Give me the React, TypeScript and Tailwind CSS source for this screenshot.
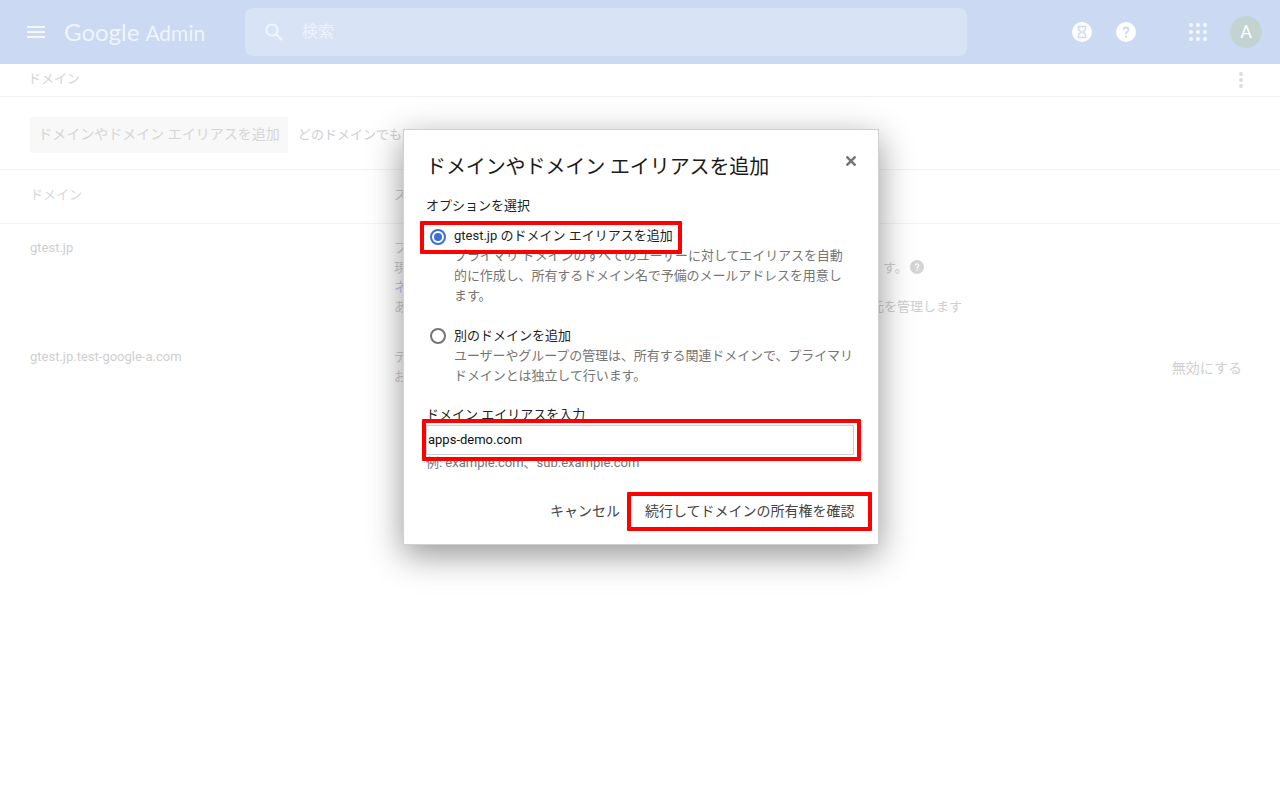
import React from "react";

const F = "font-['Roboto','Noto_Sans_CJK_JP',sans-serif]";

function HelpDisc({ size, fg, bg }: { size: number; fg: string; bg: string }) {
  return (
    <svg width={size} height={size} viewBox="0 0 24 24">
      <circle cx="12" cy="12" r="12" fill={bg} />
      <path d="M8 9.4a4 4 0 0 1 8 0c0 2.6-3 2.900-3 5.400h-2.200c0-3.400 3-3.400 3-5.400a1.800 1.800 0 0 0-3.600 0z" fill={fg} />
      <rect x="10.800" y="16.200" width="2.300" height="2.400" fill={fg} />
    </svg>
  );
}

function Header() {
  return (
    <header className="h-16 bg-[#cbd9f3] flex items-center shrink-0">
      <svg className="ml-[27px] w-[18px] h-3" viewBox="0 0 18 12">
        <path d="M0 0h18v2H0zM0 5h18v2H0zM0 10h18v2H0z" fill="#f4f7fd" />
      </svg>
      <span className="ml-[19px] w-[181px] text-[#f0f4fc] font-['Lato',sans-serif] whitespace-nowrap flex items-baseline">
        <span className="text-[24px]">Google</span>
        <span className="ml-[6px] text-[21px]">Admin</span>
      </span>
      <div className="w-[722px] h-12 rounded-lg bg-[#d8e3f6] flex items-center pl-[19px]">
        <svg width="20" height="20" viewBox="0 0 20 20" fill="none" stroke="#f0f4fc" strokeWidth="2">
          <circle cx="8" cy="8" r="5.600" />
          <path d="M12.200 12.200l6 6" />
        </svg>
        <span className="ml-[18px] text-base text-[#eef3fb]">検索</span>
      </div>
      <div className="ml-[105px] flex items-center">
        <svg width="20" height="20" viewBox="0 0 20 20">
          <circle cx="10" cy="10" r="10" fill="#fff" />
          <path d="M6.500 4.500h7v3L11 10l2.500 2.500v3h-7v-3L9 10 6.500 7.500z" fill="none" stroke="#cbd9f3" strokeWidth="1.500" />
        </svg>
        <span className="ml-6">
          <HelpDisc size={20} fg="#cbd9f3" bg="#fff" />
        </span>
        <svg className="ml-[53px]" width="18" height="18" viewBox="0 0 18 18" fill="#f4f7fd">
          {[2, 9, 16].map((y) =>
            [2, 9, 16].map((x) => <circle key={`${x}-${y}`} cx={x} cy={y} r="2" />),
          )}
        </svg>
        <div className="ml-[23px] w-8 h-8 rounded-full bg-[#c3d3d1] flex items-center justify-center text-white text-lg">
          A
        </div>
      </div>
    </header>
  );
}

function Background() {
  return (
    <div className="text-[13px] text-[#cfcfcf]">
      <div className="h-[33px] border-b border-[#f0f0f0] flex items-center justify-between pl-7 pr-9 pb-[2px]">
        <span className="text-[#d4d4d4]">ドメイン</span>
        <svg width="6" height="18" viewBox="0 0 6 18" fill="#dedede" className="mt-[2px]">
          <circle cx="3" cy="3" r="2" />
          <circle cx="3" cy="9" r="2" />
          <circle cx="3" cy="15" r="2" />
        </svg>
      </div>
      <div className="h-[73px] border-b border-[#f4f4f4] flex items-center pl-[30px] pt-[3px]">
        <div className="h-9 w-[258px] bg-[#f8f8f8] flex items-center justify-center text-[14px] text-[#d6d6d6]">
          ドメインやドメイン エイリアスを追加
        </div>
        <span className="ml-[10px] text-[#cfcfcf]">どのドメインでも</span>
      </div>
      <div className="h-[54px] border-b border-[#f4f4f4] flex items-center pl-[30px] pb-[3px]">
        <span className="w-[364px] text-[#d8d8d8]">ドメイン</span>
        <span>ス</span>
      </div>
      <div className="flex pl-[30px] pt-[14px] h-[123px]">
        <span className="w-[364px] leading-5">gtest.jp</span>
        <div className="leading-[19.500px] whitespace-nowrap">
          <div>プライマリ ドメイン</div>
          <div className="flex items-center">
            <span className="w-[489px]">現在のドメインを管理</span>
            <span className="w-[27px]">す。</span>
            <span>
              <HelpDisc size={14} fg="#fff" bg="#d4d4d4" />
            </span>
          </div>
          <div className="text-[#bccbea]">ネームサーバー</div>
          <div className="flex">
            <span className="w-[477px]">あなたのドメイン</span>
            <span>元を管理します</span>
          </div>
        </div>
      </div>
      <div className="flex pl-[30px] pr-[38px]">
        <span className="w-[364px] leading-5">gtest.jp.test-google-a.com</span>
        <div className="leading-[20px] whitespace-nowrap">
          <div>テスト</div>
          <div>お使いの</div>
        </div>
        <span className="ml-auto mt-[11px] leading-[20px] text-[14px]">無効にする</span>
      </div>
    </div>
  );
}

function Radio({ on }: { on?: boolean }) {
  return (
    <span
      className={
        on
          ? "w-4 h-4 mt-[2px] rounded-full border-2 border-[#3b6fd8] flex items-center justify-center shrink-0"
          : "w-4 h-4 rounded-full border-2 border-[#757575] shrink-0"
      }
    >
      {on && <span className="w-2 h-2 rounded-full bg-[#3b6fd8]" />}
    </span>
  );
}

function Dialog() {
  return (
    <div className="absolute left-[403px] top-[129px] w-[476px] h-[416px] bg-white border border-[#d0d0d0] shadow-[0_10px_32px_rgba(0,0,0,0.42)] pl-[22px] pr-[23px] pt-[22px] text-[13px] text-[#212121]">
      <div className="flex items-start justify-between">
        <h2 className="text-[20px] leading-[30px] tracking-[-0.1px] text-[#1a1a1a] font-normal whitespace-nowrap">
          ドメインやドメイン エイリアスを追加
        </h2>
        <svg className="mt-[4px] mr-[-1px]" width="10" height="10" viewBox="0 0 10 10" stroke="#757575" strokeWidth="2.500">
          <path d="M0.500 0.500l9 9M9.500 0.500l-9 9" />
        </svg>
      </div>
      <div className="mt-[14px] leading-5">オプションを選択</div>
      <div className="mt-[10px] pl-[4px]">
        <div className="flex items-center h-5">
          <Radio on />
          <span className="ml-[8px] whitespace-nowrap">gtest.jp のドメイン エイリアスを追加</span>
        </div>
        <p className="ml-[24px] w-[396px] leading-5 tracking-[-0.08px] text-[#757575]">
          プライマリ ドメインのすべてのユーザーに対してエイリアスを自動的に作成し、所有するドメイン名で予備のメールアドレスを用意します。
        </p>
      </div>
      <div className="mt-[20px] pl-[4px]">
        <div className="flex items-center h-5">
          <Radio />
          <span className="ml-[8px]">別のドメインを追加</span>
        </div>
        <p className="ml-[24px] w-[404px] leading-5 tracking-[-0.08px] text-[#757575]">
          ユーザーやグループの管理は、所有する関連ドメインで、プライマリドメインとは独立して行います。
        </p>
      </div>
      <div className="mt-[19px] leading-5">ドメイン エイリアスを入力</div>
      <div className="h-[30px] w-[428px] border border-[#cfcfcf] flex items-center pl-[1px] text-[13px] text-[#111]">
        apps-demo.com
      </div>
      <div className="mt-[-2px] leading-5 text-[#757575]">例: example.com、sub.example.com</div>
      <div className="mt-[28px] flex items-center">
        <span className="ml-[124px] text-[14px] text-[#444]">キャンセル</span>
        <span className="ml-[25px] text-[14px] text-[#444]">続行してドメインの所有権を確認</span>
      </div>
      <div className="absolute left-[16px] top-[91px] w-[262px] h-[33px] border-[4px] border-[#f00] rounded-[1px]" />
      <div className="absolute left-[18px] top-[289px] w-[439px] h-[42px] border-[4px] border-[#f00] rounded-[1px]" />
      <div className="absolute left-[223px] top-[362px] w-[245px] h-[39px] border-[4px] border-[#f00] rounded-[1px]" />
    </div>
  );
}

export default function App() {
  return (
    <div className={`relative w-[1280px] h-[800px] bg-white overflow-hidden flex flex-col ${F}`}>
      <Header />
      <Background />
      <Dialog />
    </div>
  );
}
